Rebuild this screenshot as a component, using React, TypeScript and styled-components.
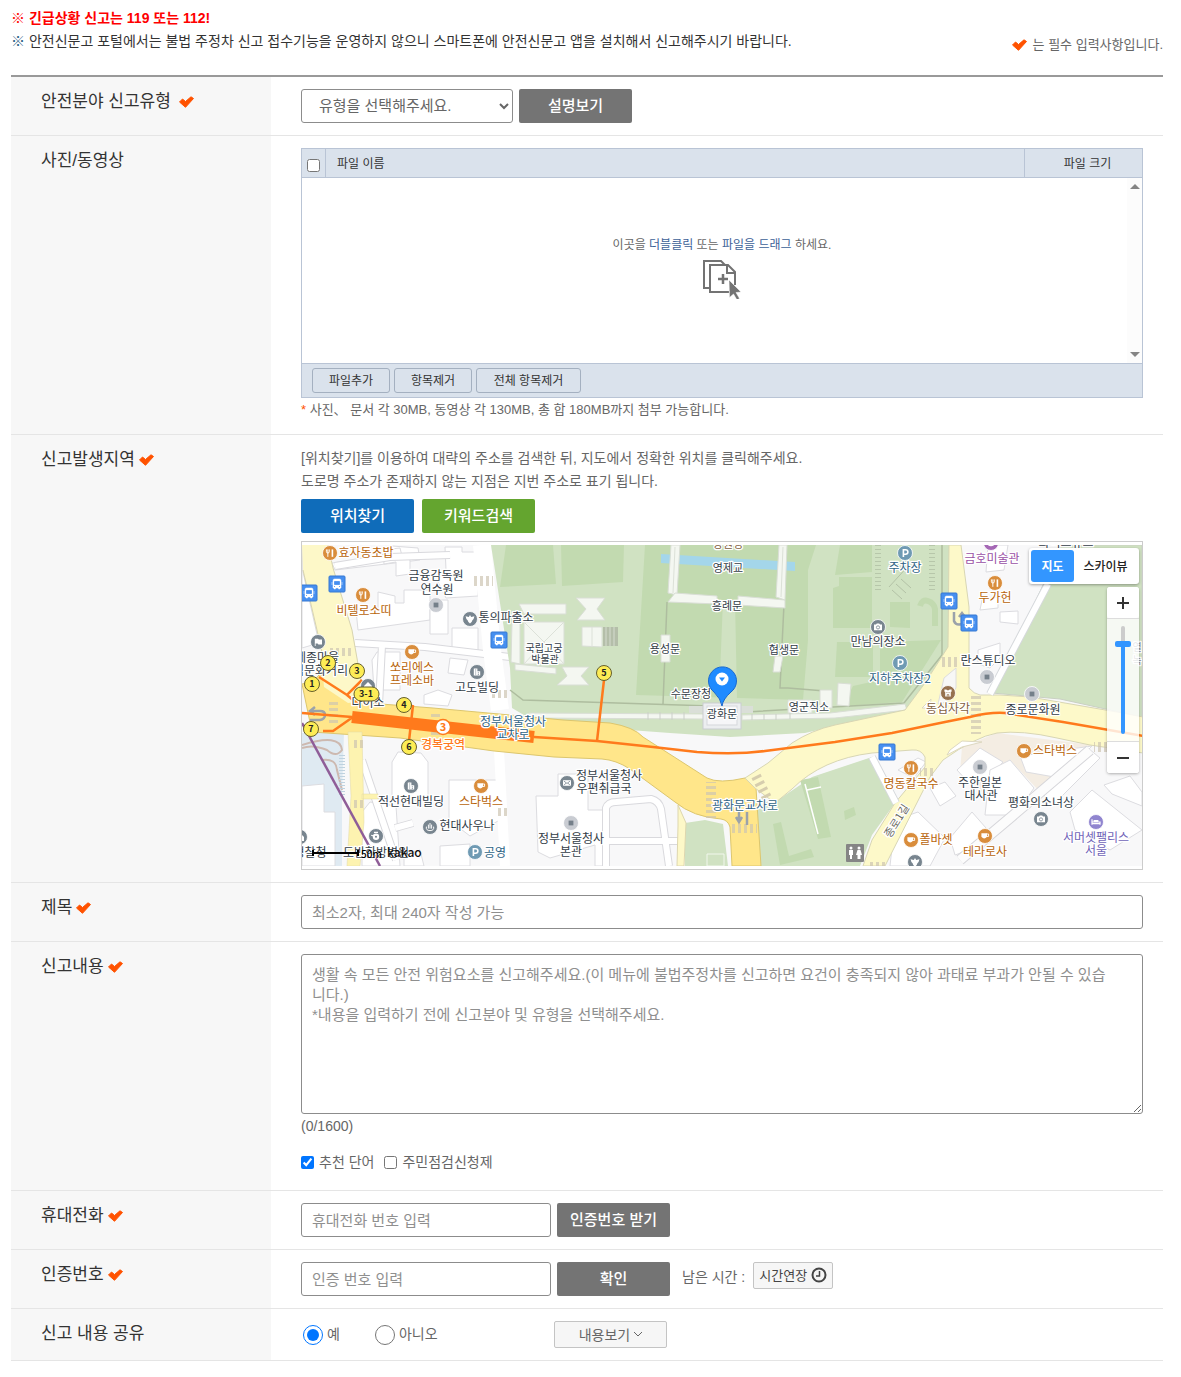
import React, { useState } from "react";
import styled, { createGlobalStyle, css } from "styled-components";

const sans = `"Liberation Sans", "Noto Sans CJK KR", sans-serif`;
const korean = `"Noto Sans CJK KR", "Liberation Sans", sans-serif`;

const GlobalStyle = createGlobalStyle`
  * { box-sizing: border-box; }
  body {
    margin: 0;
    background: #fff;
    color: #666;
    font-family: ${sans};
    font-size: 14px;
    line-height: 23px;
  }
  input, select, textarea, button { font-family: inherit; }
`;

const Page = styled.main`
  padding: 7px 18px 16px 11px;
`;

const Intro = styled.header`
  display: flex;
  justify-content: space-between;
  align-items: flex-end;
  padding-bottom: 22px;
`;

const Notice = styled.p<{ $urgent?: boolean }>`
  margin: 0;
  color: ${(p) => (p.$urgent ? "#f00" : "#333")};
  font-weight: ${(p) => (p.$urgent ? 700 : 400)};
`;

const NoticeMark = styled.span`
  color: #2c5f86;
`;

const RequiredNote = styled.p`
  display: flex;
  align-items: center;
  gap: 6px;
  margin: 0 0 -3px;
  font-size: 13px;
`;

const CheckSvg = styled.svg`
  flex: none;
  width: 15px;
  height: 12px;
  fill: #ff5200;
  stroke: #ff5200;
  stroke-linejoin: round;
`;

const Form = styled.form`
  border-top: 2px solid #999;
`;

const Row = styled.div`
  display: grid;
  grid-template-columns: 260px minmax(0, 1fr);
  border-bottom: 1px solid #e5e5e5;
`;

const LabelCell = styled.div<{ $wide?: boolean }>`
  display: flex;
  align-items: center;
  align-content: flex-start;
  flex-wrap: wrap;
  gap: ${(p) => (p.$wide ? 8 : 4)}px;
  padding: 13px 0 11px 30px;
  background: #f7f7f7;
  color: #333;
  font-size: 17px;
  line-height: 24px;
`;

const Content = styled.div`
  padding: 12px 20px 12px 30px;
`;

const Line = styled.div<{ $gap?: number; $top?: boolean }>`
  display: flex;
  align-items: ${(p) => (p.$top ? "flex-start" : "center")};
  gap: ${(p) => p.$gap ?? 6}px;
`;

const field = css`
  border: 1px solid #8c8c8c;
  border-radius: 3px;
  background: #fff;
  color: #666;
  font-size: 15px;
  &::placeholder { color: #8f8f8f; opacity: 1; }
`;

const TextInput = styled.input<{ $short?: boolean }>`
  ${field}
  display: block;
  width: ${(p) => (p.$short ? "250px" : "100%")};
  height: 34px;
  padding: 0 10px;
`;

const TypeSelect = styled.select`
  ${field}
  width: 212px;
  height: 34px;
  padding: 0 0 2px 13px;
`;

const TextArea = styled.textarea`
  ${field}
  display: block;
  width: 100%;
  height: 160px;
  padding: 10px 28px 10px 10px;
  line-height: 20px;
`;

const ActionButton = styled.button<{ $color?: string }>`
  width: 113px;
  height: 34px;
  padding: 0 0 3px;
  border: 0;
  border-radius: 2px;
  background: ${(p) => p.$color ?? "#747474"};
  color: #fff;
  font-size: 15px;
  font-weight: 500;
`;

const SmallButton = styled.button<{ $wide?: boolean }>`
  display: flex;
  align-items: center;
  justify-content: center;
  gap: 4px;
  width: ${(p) => (p.$wide ? 113 : 80)}px;
  height: 27px;
  padding: 0 0 2px;
  border: 1px solid #c4c4c4;
  border-radius: 2px;
  background: #f6f6f6;
  color: ${(p) => (p.$wide ? "#666" : "#444")};
  font-size: ${(p) => (p.$wide ? 14 : 13)}px;
`;

/* file uploader */

const Uploader = styled.div`
  border: 1px solid #b9c4d5;
  color: #333;
  font-size: 12px;
`;

const FileTable = styled.table`
  width: 100%;
  table-layout: fixed;
  border-collapse: separate;
  border-spacing: 0;
`;

const FileHead = styled.th<{ $width?: number; $left?: boolean }>`
  width: ${(p) => (p.$width ? `${p.$width}px` : "auto")};
  height: 29px;
  padding: 2px 0 0 ${(p) => (p.$left ? 11 : 8)}px;
  border: solid #b9c4d5;
  border-width: 0 1px 1px 0;
  background: #dae2ec;
  font-weight: 400;
  line-height: 20px;
  text-align: ${(p) => (p.$left ? "left" : "center")};
  &:first-child { padding: 0; }
  &:last-child { border-right: 0; }
`;

const Tick = styled.input`
  width: 13px;
  height: 13px;
  margin: 0;
  vertical-align: middle;
`;

const HeadTick = styled(Tick)`
  display: block;
  margin: 4px auto 0;
`;

const DropZone = styled.div`
  display: flex;
  height: 185px;
  padding-left: 15px;
`;

const DropHint = styled.div`
  display: flex;
  flex: 1;
  flex-direction: column;
  align-items: center;
  gap: 1px;
  padding-top: 56px;
  color: #666;
  b { color: #3c6197; font-weight: 400; }
`;

const ScrollTrack = styled.div`
  display: flex;
  flex-direction: column;
  justify-content: space-between;
  align-items: center;
  width: 15px;
  padding: 6px 0;
  background: #fcfcfc;
`;

const UploadActions = styled.div`
  display: flex;
  gap: 4px;
  padding: 4px 10px;
  border-top: 1px solid #b9c4d5;
  background: #dae2ec;
`;

const FileButton = styled.button<{ $wide?: boolean }>`
  width: ${(p) => (p.$wide ? 105 : 78)}px;
  height: 25px;
  padding: 0 0 2px;
  border: 1px solid #a4b0c0;
  border-radius: 3px;
  background: transparent;
  color: #333;
  font-size: 12px;
`;

const FileNote = styled.p`
  margin: 0;
  font-size: 13px;
  line-height: 24px;
  span { color: #ff5200; }
`;

/* map */

const Guide = styled.p`
  margin: 0 0 6px;
`;

const MapFrame = styled.div`
  position: relative;
  margin-top: 8px;
  padding: 3px 0;
  border: 1px solid #ccc;
`;

const MapCanvas = styled.svg`
  display: block;
  width: 100%;
  height: 321px;
  font-family: ${korean};
`;

const MapTypes = styled.div`
  position: absolute;
  top: 6px;
  right: 3px;
  display: flex;
  padding: 2px;
  border-radius: 3px;
  background: #fff;
  box-shadow: 0 1px 3px rgba(0, 0, 0, 0.35);
`;

const MapTypeButton = styled.button<{ $active?: boolean }>`
  width: ${(p) => (p.$active ? 43 : 63)}px;
  height: 32px;
  padding: 0 0 1px;
  border: 0;
  border-radius: 3px;
  background: ${(p) => (p.$active ? "#3396ff" : "#fff")};
  color: ${(p) => (p.$active ? "#fff" : "#222")};
  font-size: 12px;
  font-weight: ${(p) => (p.$active ? 700 : 500)};
`;

const ZoomControl = styled.div`
  position: absolute;
  top: 45px;
  right: 3px;
  display: flex;
  flex-direction: column;
  width: 32px;
  border-radius: 3px;
  background: rgba(255, 255, 255, 0.8);
  box-shadow: 0 1px 3px rgba(0, 0, 0, 0.3);
`;

const ZoomButton = styled.button`
  display: flex;
  align-items: center;
  justify-content: center;
  height: 31px;
  padding: 0;
  border: 0;
  border-radius: 3px;
  background: #fff;
`;

const ZoomSlot = styled.div`
  display: flex;
  justify-content: center;
  padding: 7px 0;
  border: solid #ddd;
  border-width: 1px 0;
`;

const ZoomRange = styled.input`
  appearance: none;
  writing-mode: vertical-lr;
  direction: rtl;
  width: 16px;
  height: 108px;
  margin: 0;
  background: transparent;
  &::-webkit-slider-runnable-track {
    width: 4px;
    height: 108px;
    border-radius: 2px;
    background: linear-gradient(to bottom, #ccc 18px, #3396ff 18px);
  }
  &::-webkit-slider-thumb {
    appearance: none;
    width: 16px;
    height: 6px;
    margin-left: -6px;
    border-radius: 2px;
    background: #3396ff;
  }
`;

/* lower rows */

const Counter = styled.p`
  margin: 0;
  line-height: 24px;
`;

const Options = styled.div`
  display: flex;
  align-items: center;
  gap: 10px;
  height: 32px;
  margin-top: 8px;
`;

const Option = styled.label`
  display: flex;
  align-items: center;
  gap: 5px;
`;

const Remaining = styled.span`
  padding: 0 2px 0 6px;
  line-height: 30px;
`;

const Radios = styled.div`
  display: flex;
  gap: 35px;
  width: 253px;
  padding-left: 2px;
`;

const RadioLabel = styled.label`
  display: flex;
  align-items: center;
  gap: 4px;
`;

const Radio = styled.input`
  width: 20px;
  height: 20px;
  margin: 0;
`;

/* ---- map drawing ---- */

type Kind =
  | "food" | "cup" | "dot" | "cam" | "park" | "bank" | "police"
  | "flag" | "mail" | "spa" | "bed" | "art" | "pot" | "owl" | "home";

const kindColor: Record<Kind, string> = {
  food: "#d98d3c", cup: "#d98d3c", dot: "#c9ccd2", cam: "#78858f", park: "#6f9ab3",
  bank: "#78858f", police: "#78858f", flag: "#78858f", mail: "#78858f", spa: "#78858f",
  bed: "#9085cf", art: "#a568b5", pot: "#78858f", owl: "#96714f", home: "#78858f",
};

function Glyph({ kind }: { kind: Kind }) {
  const line = { fill: "none", stroke: "#fff", strokeWidth: 1.2 } as const;
  switch (kind) {
    case "food":
      return (
        <g {...line}>
          <path d="M-4.500-4.500v3q0 1.500 1.800 1.500t1.800-1.500v-3M-2.700-4.500V4.800" />
          <path d="M3 4.800V-4.500" strokeWidth="2" />
        </g>
      );
    case "cup":
      return <g><path d="M-4.500-3.500h7v4.500q-3.500 4-7 0z" fill="#fff" /><path d="M2-2.500h2.500v3H2" {...line} /></g>;
    case "dot":
      return <rect x="-3" y="-3" width="6" height="6" fill="#75808a" />;
    case "cam":
      return <g><path d="M-5-3h2.500l1-1.500h3l1 1.500h2.500v7h-10z" fill="#fff" /><circle r="2" cy=".5" fill="none" stroke="#78858f" /></g>;
    case "park":
      return <path d="M-2 5v-9H.6q3 0 3 2.800T.6 1.600h-2.600" {...line} strokeWidth="2" />;
    case "bank":
      return <g><path d="M-4 4.500v-9h4.500v3.500h3.500v5.500z" fill="#fff" /><path d="M-2.500-2.500h1.500M-2.500 0h1.500M-2.500 2.500h1.500M1 1h1.500M1 3h1.500" stroke="#78858f" /></g>;
    case "police":
      return <path d="M-5.500-3.500L-1.500-2.500 0-5l1.500 2.500 4-1Q5 0 3 1.500 2 5 0 5.500-2 5-3 1.500-5 0-5.500-3.500z" fill="#fff" />;
    case "flag":
      return <path d="M-4 5v-9h4l1 1h4v6h-4.500l-1-1h-2.500v3z" fill="#fff" />;
    case "mail":
      return <g><rect x="-5" y="-3.500" width="10" height="7" fill="#fff" /><path d="M-4-2.500L0 .5l4-3M-4 3l3-3M4 3L1 0" fill="none" stroke="#78858f" /></g>;
    case "spa":
      return <g {...line}><path d="M-4.500-.5q-1 5 4.500 5t4.500-5M-2 2v-5M0 2v-7M2 2v-5" /></g>;
    case "bed":
      return <g><path d="M-5-3.500v7M5 3.500V0H-5v2H5" fill="none" stroke="#fff" strokeWidth="1.500" /><rect x="-3" y="-2.500" width="6" height="2.500" fill="#fff" /></g>;
    case "art":
      return <path d="M-3.500 3q3.500 2 7 0V0q-1-3-3.500-3.500T-3.500 0z" fill="#fff" />;
    case "pot":
      return <g><circle r="4" cy="1" fill="#fff" /><path d="M-2.500-4.500h5M-6-1l3 1" stroke="#fff" strokeWidth="1.500" /><circle r="1.300" cy="1" fill="#78858f" /></g>;
    case "owl":
      return <g><path d="M-4.500-4.500h2.500l1 1h2l1-1h2.500v3h-1v6h-7v-6h-1z" fill="#fff" /><path d="M-2-.5h1.300M.7-.5H2M-1 4.500V2h2v2.500" stroke="#96714f" fill="none" /></g>;
    default:
      return <path d="M-5 0l5-5 5 5v5H2V2h-4v3h-3z" fill="#fff" />;
  }
}

const markers: [Kind, number, number][] = [
  ["food", 330, 553], ["food", 363, 595], ["dot", 436, 605], ["police", 470, 619],
  ["flag", 318, 642], ["cup", 412, 652], ["bank", 477, 672], ["home", 368, 686],
  ["bank", 411, 786], ["cup", 481, 786], ["spa", 430, 827], ["pot", 376, 836],
  ["park", 475, 852], ["mail", 567, 783], ["dot", 571, 823], ["park", 905, 553],
  ["cam", 878, 627], ["park", 900, 663], ["owl", 948, 693], ["art", 991, 543],
  ["food", 995, 583], ["dot", 987, 677], ["dot", 1032, 694], ["cup", 1024, 751],
  ["dot", 980, 767], ["food", 911, 768], ["cam", 1041, 819], ["bed", 1096, 822],
  ["cup", 985, 836], ["cup", 911, 840], ["police", 915, 862], ["home", 300, 837],
];

const ink = "#333d47";
const orange = "#b8640a";
const teal = "#2f6486";
const brown = "#82603e";

const labels: [string, number, number, string, number?][] = [
  ["효자동초밥", 366, 557, orange], ["금융감독원", 436, 580, ink], ["연수원", 437, 594, ink],
  ["비텔로소띠", 364, 615, orange], ["통의파출소", 506, 622, ink], ["세종마을", 317, 662, ink],
  ["음식문화거리", 315, 675, ink], ["쏘리에스", 412, 672, orange], ["프레소바", 412, 685, orange],
  ["고도빌딩", 477, 692, ink], ["다이소", 368, 707, ink], ["국립고궁", 544, 652, ink, 10],
  ["박물관", 545, 663, ink, 10], ["정부서울청사", 513, 726, teal], ["교차로", 513, 739, teal],
  ["적선현대빌딩", 411, 806, ink], ["스타벅스", 481, 806, orange], ["현대사우나", 467, 830, ink],
  ["도반한방병원", 376, 857, ink], ["경찰청", 310, 857, ink], ["공영", 495, 857, teal],
  ["정부서울청사", 609, 780, ink], ["우편취급국", 604, 793, ink], ["정부서울청사", 571, 843, ink],
  ["본관", 571, 856, ink], ["향원정", 728, 548, brown, 11], ["영제교", 728, 572, ink, 11],
  ["흥례문", 727, 610, ink, 11], ["용성문", 665, 653, ink, 11], ["협생문", 784, 654, ink, 11],
  ["수문장청", 691, 698, ink, 11], ["광화문", 722, 718, ink, 11], ["영군직소", 809, 711, ink, 11],
  ["주차장", 905, 572, teal], ["만남의장소", 878, 646, ink], ["지하주차장2", 900, 683, teal],
  ["동십자각", 948, 713, brown], ["금호미술관", 992, 563, "#994fa5"], ["두가헌", 995, 602, orange],
  ["란스튜디오", 988, 665, ink], ["종로문화원", 1033, 714, ink], ["스타벅스", 1055, 755, orange],
  ["주한일본", 980, 787, ink], ["대사관", 981, 800, ink], ["평화의소녀상", 1041, 807, ink],
  ["명동칼국수", 911, 788, orange], ["광화문교차로", 745, 810, teal], ["서머셋팰리스", 1096, 842, "#7164b8"],
  ["서울", 1096, 855, "#7164b8"], ["테라로사", 985, 856, orange], ["폴바셋", 936, 844, orange],
  ["열", 1137, 651, "#8a9096", 10], ["녹", 1137, 664, "#8a9096", 10], ["화이트큐브", 1066, 547, ink],
];

const exits: [string, number, number][] = [
  ["1", 312, 684], ["2", 328, 663], ["3", 357, 671], ["4", 404, 705],
  ["5", 604, 673], ["6", 409, 747], ["7", 311, 729],
];

const buses: [number, number][] = [[309, 593], [337, 584], [499, 640], [949, 601], [969, 623], [887, 752]];

const blocks = [
  "302 545 303 572 319 643 302 648", "335 570 420 560 418 548 392 546 390 556 332 563",
  "383 550 400 548 402 556 410 560 410 574 396 576 396 562 384 564", "445 547 462 547 462 552 480 552 478 596 446 598 437 580 446 570",
  "356 610 378 610 378 592 395 596 395 603 404 603 404 590 430 590 430 620 358 630", "430 600 448 600 448 634 430 634",
  "452 628 478 628 478 651 452 651", "372 660 377 652 400 652 400 690 374 690", "450 658 468 660 464 675 448 673",
  "424 695 438 690 452 695 448 706 424 704", "392 762 398 752 421 753 428 762 428 800 392 800",
  "302 786 324 784 324 812 335 812 335 866 302 866", "449 780 500 780 500 820 470 836 449 820",
  "536 796 558 796 558 774 588 774 588 810 606 810 606 866 595 866 595 845 550 858 538 852",
  "362 812 370 802 396 806 400 866 362 866", "440 846 470 844 470 866 440 866", "404 855 420 850 424 866 404 866",
  "988 545 1008 545 1004 570 986 572", "982 600 998 597 998 608 980 610", "1000 612 1018 611 1018 624 1000 622",
  "978 650 1000 643 1000 658 990 668 978 664", "957 770 980 748 1003 762 985 782 968 782", "1020 756 1092 746 1060 778 1026 772",
  "990 770 1010 760 1034 788 1015 815 985 815", "1070 812 1092 790 1142 830 1110 850 1075 830", "1104 785 1130 776 1142 792 1142 806 1112 794",
  "950 838 972 812 986 828 975 848 955 855", "895 820 918 812 945 838 930 866 890 866", "1042 792 1088 748 1100 758 1052 806",
  "898 770 918 758 926 762 914 778", "930 788 945 782 956 796 940 806",
];

const darkGrass = [
  "506 545 553 545 556 584 500 587", "561 545 624 545 623 582 562 586", "645 545 816 545 808 570 808 640 803 700 636 695",
  "840 545 872 545 872 572 835 575", "839 577 872 577 872 628 833 628 833 588 839 586", "890 602 910 602 910 628 890 627",
  "837 642 873 642 873 677 835 677", "880 642 941 640 902 702 843 706 853 686 880 680",
];

const palace = [
  "671 545 680 545 677 595 668 593", "675 593 717 596 717 604 668 602", "738 596 785 600 785 608 738 605",
  "779 545 787 545 785 600 776 597", "519 604 566 604 566 614 524 614", "512 622 520 622 520 664 511 662",
  "524 622 564 622 564 664 524 664", "515 664 556 668 556 674 515 670", "576 598 605 598 597 609 605 620 577 620 586 609",
  "582 627 602 627 602 647 582 646", "562 667 589 667 581 676 589 685 557 685 567 676", "661 635 670 635 670 662 661 662",
  "775 656 783 656 780 672 773 672", "820 690 832 690 832 708 820 708", "838 683 851 684 849 706 837 705",
  "788 700 812 700 812 713 788 713", "529 713 704 714 704 719 529 718", "742 715 830 713 905 704 907 710 835 718 742 720",
];

const crossings: [number, number, number, number][] = [
  [328, 648, 26, 8], [471, 576, 22, 10], [329, 702, 9, 22], [431, 712, 9, 26], [942, 657, 16, 10],
  [731, 824, 26, 9], [706, 782, 10, 36], [971, 694, 10, 40], [1094, 742, 14, 10],
  [492, 690, 18, 8], [495, 808, 12, 8], [353, 740, 10, 8], [353, 800, 10, 8], [920, 768, 14, 8], [868, 862, 20, 4],
];

function PlaceMap() {
  return (
    <MapCanvas viewBox="302 545 840 321" preserveAspectRatio="xMidYMid slice" role="img" aria-label="신고발생지역 지도">
      <defs>
        <pattern id="bars-v" width="6" height="6" patternUnits="userSpaceOnUse">
          <rect width="3" height="6" fill="#cdc5b2" fillOpacity=".7" />
        </pattern>
        <pattern id="bars-h" width="6" height="6" patternUnits="userSpaceOnUse">
          <rect width="6" height="3" fill="#cdc5b2" fillOpacity=".7" />
        </pattern>
      </defs>
      <rect x="302" y="545" width="840" height="321" fill="#f8f8f9" />
      <path d="M302 733h42l-2 60v73h-40z" fill="#dfeaf2" />
      <path d="M302 745q38-12 40 5-6 8-15 0-14-6-25-2M322 760q14-2 15 10l5 20" fill="none" stroke="#cdb9b0" strokeWidth="2" />
      <path d="M342 755v40" stroke="#bfd2df" strokeDasharray="1 2" strokeWidth="6" />
      <path d="M962 747l35-14 95 12-52 47-30-32-28 32-22-20z" fill="#f4ede3" />
      {blocks.map((d) => <polygon key={d} points={d} fill="#fff" stroke="#dcdce0" />)}

      <g fill="none" strokeLinejoin="round">
        <g stroke="#d9d9dd" strokeWidth="8">
          <path d="M335 566l55-9 60-2M355 643l70 4 85 10M382 645l-3 60M362 760l34 100M395 828l18-5M606 866v-58q2-6 10-6l35-3q8 2 10 10l8 57M608 841h75" />
        </g>
        <g stroke="#fff" strokeWidth="6">
          <path d="M335 566l55-9 60-2M355 643l70 4 85 10M382 645l-3 60M362 760l34 100M395 828l18-5M606 866v-58q2-6 10-6l35-3q8 2 10 10l8 57M608 841h75" />
        </g>
        <path d="M482 545l10 105 8 60" stroke="#fff" strokeWidth="18" />
        <path d="M499 750l6 116" stroke="#fff" strokeWidth="10" />
      </g>

      <path d="M491 545h458v102l-9 17-35 46-100 23-75 4-60-4-68-5-73-10-17-10-2-40-12-78z" fill="#d0e2c2" />
      <path d="M1062 545h80v172l-82-18-68-6z" fill="#d0e2c2" stroke="#c9d0c2" />
      <path d="M775 802l37-25 60-20 23 46-23 32-12 31h-101l-2-56z" fill="#d0e2c2" />
      <path d="M685 823l20-3 18 4 5 42h-43z" fill="#d0e2c2" />
      <path d="M707 854h17v12h-17z" fill="none" stroke="#f1f7ec" />
      {darkGrass.map((d) => <polygon key={d} points={d} fill="#c2dab0" />)}
      <path d="M920 606q2-7 8-5t7 8v17" fill="none" stroke="#c2dab0" strokeWidth="6" />
      <path d="M800 780l18-3 13 60-13 2zM773 824l8-2 8 34 22-7 3 8-34 8zM844 811l10-4 2 8-11 5z" fill="#c2dab0" />
      <path d="M805 784l13 50M807 790l14-3" stroke="#fff" strokeWidth="1.500" fill="none" />
      <path d="M723 600h12l2 100h-18z" fill="#d0e2c2" />
      <path d="M661 554l134 8v9l-134-8z" fill="#a4d6ea" />
      <path d="M510 690l13 10 188 6M667 602l-4 102M784 604l-4 84h8l37 3M746 712l158-9 38-48V545" fill="none" stroke="#aebd9f" strokeWidth="1.500" />
      {palace.map((d) => <polygon key={d} points={d} fill="#f4f7f1" stroke="#d9ded5" />)}
      <path d="M524 622l20 20 20-20M544 642l-20 22M544 642l20 22M592 627v20M675 547l-2 46M783 547l-2 50" fill="none" stroke="#dce1d8" />
      <rect x="603" y="627" width="15" height="19" fill="#b4bea9" />
      <path d="M606 627v19M610 627v19M614 627v19" stroke="#d5dccf" />
      <path d="M648 712v8M660 712v8M672 712v8M684 712v8M752 714v6M764 714v6M776 714v6M790 713v6" stroke="#cbd0c8" />
      <path d="M689 706h64v7h-64z" fill="#dadfd8" />
      <rect x="703" y="703" width="38" height="26" fill="#eceef0" stroke="#c9ccd0" />
      <rect x="707" y="706" width="30" height="19" fill="#f6f6f8" stroke="#d5d7db" />
      <path d="M878 545v48M932 545v48" stroke="#b7c7aa" strokeWidth="6" strokeDasharray="1 3" />
      <path d="M889 587l20-22M892 590l10 9M896 584l10 9M901 579l10 9" stroke="#b3c2a6" />
      <path d="M302 684q12-2 18-10l8 8 40 21 65 5 77 7 53 5 47 3q24 4 33 14l64 41q12 6 38 0 10 2 11 10l5 78h-29l-2-39q-2-7-9-8-28-2-46-17l-45-33q-14-9-28-10l-48-2-60-6-94-13-88-6z" fill="#ffe68a" stroke="#dcc66e" />
      <path d="M302 545h26l5 23 19 62 13 71-17 2-24-16-4-43-17-74z" fill="#fdf8c8" />
      <path d="M328 545l5 23 19 62 12 68M303 570l17 73 4 20" fill="none" stroke="#d8d4b0" />
      <path d="M348 732h14l2 90-4 44h-13l4-70zM362 794h16v5h-16z" fill="#fdf3b0" stroke="#e3d9a4" strokeWidth=".5" />
      <path d="M678 805l8 18-2 43h-7l1-40z" fill="#fdf8c8" stroke="#ddd6ae" />
      <path d="M745 778l23-15 24-20q20-13 43-18l70-15 20-27 23-36 1-102h12l8 62v81q5 6 11 7h20l30 2 87 15 26 5v36l-53-8-33-7q-35-8-60-5-22 4-54 27l-13 17-45 89h-22l9-26 23-37 30-36v-10q-4-8-13-7l-40 3q-50 6-80 36l-17 14-20-15z" fill="#fdf9c9" stroke="#d8d6b4" />
      <path d="M944 678l12-10v20l-10 14-8 2z" fill="#f7f7f6" stroke="#ddd" />
      <path d="M950 750l12-9 20 1-20 5-15 8zM922 708l9-9-1 9z" fill="#fff" stroke="#ddd8c0" />
      <path d="M1048 584l-58 110M872 757l24 46" stroke="#d6d9dc" strokeWidth="8" fill="none" />
      <path d="M1048 584l-58 110M872 757l24 46" stroke="#fff" strokeWidth="6" fill="none" />
      <path d="M1090 750l-80 68-50 42" stroke="#d6d6da" strokeWidth="11" fill="none" />
      <path d="M1090 750l-80 68-50 42" stroke="#fcfcfc" strokeWidth="9" fill="none" />
      {crossings.map(([x, y, w, h]) => (
        <rect key={`${x}-${y}`} x={x} y={y} width={w} height={h} fill={w > h ? "url(#bars-v)" : "url(#bars-h)"} />
      ))}
      <path d="M756 776l16 32" stroke="#d6cdae" strokeWidth="10" strokeDasharray="3 4" />
      <path d="M739 812v9m-3-4l3 5 3-5M747 812v13M310 720h10q5-1 5-5t-5-4h-9m4-4l-5 4 5 4M954 612v9q2 5 8 3v-10m-3 3l3-4 3 4" fill="none" stroke="#9ba2aa" strokeWidth="2.500" />

      <path d="M302 723l78 143" stroke="#8f5d98" strokeWidth="2.500" />
      <g fill="none" stroke="#ff7a1c" strokeWidth="2.500">
        <path d="M302 713l50 4M319 677l28 18 15-15M347 695l12 10M323 731h10l20-14M413 705l-4 36M604 680l-7 61" />
        <path d="M534 737l63 4 56 6 44 5q38 3 68-1l70-9 57-9 53-11 25-5q20-5 35-4l58 9 80 14" />
        <path d="M352 717l182 20" strokeWidth="12" />
      </g>

      {buses.map(([x, y]) => (
        <g key={`${x}-${y}`} transform={`translate(${x} ${y})`}>
          <rect x="-8" y="-8" width="16" height="16" rx="1" fill="#468ff0" stroke="#3679d2" />
          <path d="M-4-3.500q0-1.500 1.500-1.500h5q1.500 0 1.500 1.500V4H3v1H1.500V4h-3v1H-3V4h-1zM-5-2v3M5-2v3" fill="#fff" stroke="#fff" strokeWidth=".5" />
          <path d="M-2.500-2.500h5V.500h-5zM-3 2.500h1M2 2.500h1" fill="#468ff0" stroke="#468ff0" strokeWidth=".8" />
        </g>
      ))}
      {markers.map(([kind, x, y]) => (
        <g key={`${kind}-${x}`} transform={`translate(${x} ${y})`}>
          <circle r="7.500" fill={kindColor[kind]} stroke="#fff" strokeWidth=".8" />
          <g transform="scale(.8)"><Glyph kind={kind} /></g>
        </g>
      ))}
      <g transform="translate(855 853)">
        <rect x="-9" y="-9" width="18" height="18" rx="1" fill="#858585" />
        <path d="M-6-3h4v5h-1v4h-2V2h-1zM2.500-3h3l1.500 5h-1.500v4h-3V2H1z" fill="#fff" />
        <circle cx="-4" cy="-5" r="1.500" fill="#fff" /><circle cx="4" cy="-5" r="1.500" fill="#fff" />
      </g>
      <g textAnchor="middle" fontSize="12" stroke="#fff" strokeWidth="2.500" strokeLinejoin="round" paintOrder="stroke">
        {labels.map(([text, x, y, color, size]) => (
          <text key={`${text}-${x}-${y}`} x={x} y={y} fill={color} fontSize={size ?? 12}>{text}</text>
        ))}
        <text x="443" y="749" fill="#ff7a1c" fontWeight="500">경복궁역</text>
        <text transform="translate(900 823) rotate(-58)" fill="#6b6b63" fontSize="11">종로1길</text>
      </g>
      <circle cx="443" cy="727" r="7.500" fill="#fff" stroke="#ff7a1c" strokeWidth="1.500" />
      <text x="443" y="731" textAnchor="middle" fontSize="11" fontWeight="700" fill="#ff7a1c">3</text>
      <rect x="354" y="687" width="25" height="14" rx="7" fill="#fdec55" stroke="#655f2c" />
      <text x="366" y="697" textAnchor="middle" fontSize="9" fontWeight="700" fill="#222">3-1</text>
      {exits.map(([n, x, y]) => (
        <g key={n}>
          <circle cx={x} cy={y} r="7.500" fill="#fdec55" stroke="#655f2c" />
          <text x={x} y={y + 3} textAnchor="middle" fontSize="9" fontWeight="700" fill="#222">{n}</text>
        </g>
      ))}
      <path d="M722 706q-1-7-8-14a14 14 0 1 1 17 0q-8 7-9 14z" fill="#1f8bff" stroke="#1768cf" />
      <circle cx="722" cy="679" r="6.500" fill="#fff" /><path d="M719 677.500h6l-3 4z" fill="#1f8bff" />
      <path d="M313 850v6M358 850v6M313 853h45" stroke="#000" strokeWidth="2" fill="none" />
      <text x="361" y="858" fontSize="10" fontWeight="500" fill="#000">50m</text>
      <text x="387" y="857" fontSize="12" fontWeight="500" fill="#111">kakao</text>
    </MapCanvas>
  );
}

function Check({ label }: { label?: string }) {
  return (
    <CheckSvg viewBox="0 0 15 12" role={label ? "img" : undefined} aria-label={label} aria-hidden={!label}>
      <path d="M.5 6l3-3L6.500 5.500 12 .8 14.500 2.500 6.500 11.300z" />
    </CheckSvg>
  );
}

function Label({ text, htmlFor, required, wide }: { text: string; htmlFor?: string; required?: boolean; wide?: boolean }) {
  return (
    <LabelCell $wide={wide}>
      {htmlFor ? <label htmlFor={htmlFor}>{text}</label> : <span>{text}</span>}
      {required && <Check label="필수" />}
    </LabelCell>
  );
}

export default function App() {
  const [body, setBody] = useState("");
  return (
    <Page>
      <GlobalStyle />
      <Intro>
        <div>
          <Notice $urgent>※ 긴급상황 신고는 119 또는 112!</Notice>
          <Notice>
            <NoticeMark>※</NoticeMark> 안전신문고 포털에서는 불법 주정차 신고 접수기능을 운영하지 않으니 스마트폰에 안전신문고 앱을 설치해서 신고해주시기 바랍니다.
          </Notice>
        </div>
        <RequiredNote><Check /> 는 필수 입력사항입니다.</RequiredNote>
      </Intro>

      <Form onSubmit={(e) => e.preventDefault()}>
        <Row>
          <Label text="안전분야 신고유형" htmlFor="type" required wide />
          <Content>
            <Line>
              <TypeSelect id="type"><option>유형을 선택해주세요.</option></TypeSelect>
              <ActionButton type="button">설명보기</ActionButton>
            </Line>
          </Content>
        </Row>

        <Row>
          <Label text="사진/동영상" />
          <Content>
            <Uploader>
              <FileTable>
                <thead>
                  <tr>
                    <FileHead $width={24}><HeadTick type="checkbox" aria-label="전체 선택" /></FileHead>
                    <FileHead $left>파일 이름</FileHead>
                    <FileHead $width={117}>파일 크기</FileHead>
                  </tr>
                </thead>
              </FileTable>
              <DropZone>
                <DropHint>
                  <span>이곳을 <b>더블클릭</b> 또는 <b>파일을 드래그</b> 하세요.</span>
                  <svg width="38" height="41" viewBox="0 0 38 41" fill="none" stroke="#737373" strokeWidth="2" aria-hidden>
                    <path d="M6 30H1V3h17l4 4" />
                    <path d="M26 34H7V7h18l7 7v13" />
                    <path d="M24 7v8h8" />
                    <path d="M20 16v10M15 21h10" strokeWidth="2.500" />
                    <path d="M26 22l12 12-5 .5 3.500 6-2.500 1.500-3.500-6-4 3.500z" fill="#737373" stroke="#fff" strokeWidth=".5" />
                  </svg>
                </DropHint>
                <ScrollTrack aria-hidden>
                  <svg width="10" height="5"><path d="M0 5l5-5 5 5z" fill="#858585" /></svg>
                  <svg width="10" height="5"><path d="M0 0l5 5 5-5z" fill="#858585" /></svg>
                </ScrollTrack>
              </DropZone>
              <UploadActions>
                <FileButton type="button">파일추가</FileButton>
                <FileButton type="button">항목제거</FileButton>
                <FileButton type="button" $wide>전체 항목제거</FileButton>
              </UploadActions>
            </Uploader>
            <FileNote><span>*</span> 사진、 문서 각 30MB, 동영상 각 130MB, 총 합 180MB까지 첨부 가능합니다.</FileNote>
          </Content>
        </Row>

        <Row>
          <Label text="신고발생지역" required />
          <Content>
            <Guide>
              [위치찾기]를 이용하여 대략의 주소를 검색한 뒤, 지도에서 정확한 위치를 클릭해주세요.<br />
              도로명 주소가 존재하지 않는 지점은 지번 주소로 표기 됩니다.
            </Guide>
            <Line $gap={8}>
              <ActionButton type="button" $color="#0f6cba">위치찾기</ActionButton>
              <ActionButton type="button" $color="#64a52f">키워드검색</ActionButton>
            </Line>
            <MapFrame>
              <PlaceMap />
              <MapTypes>
                <MapTypeButton type="button" $active>지도</MapTypeButton>
                <MapTypeButton type="button">스카이뷰</MapTypeButton>
              </MapTypes>
              <ZoomControl>
                <ZoomButton type="button" aria-label="확대">
                  <svg width="12" height="12"><path d="M6 0v12M0 6h12" stroke="#333" strokeWidth="2" /></svg>
                </ZoomButton>
                <ZoomSlot><ZoomRange type="range" aria-label="지도 배율" min={0} max={100} defaultValue={85} /></ZoomSlot>
                <ZoomButton type="button" aria-label="축소">
                  <svg width="12" height="12"><path d="M0 6h12" stroke="#333" strokeWidth="2" /></svg>
                </ZoomButton>
              </ZoomControl>
            </MapFrame>
          </Content>
        </Row>

        <Row>
          <Label text="제목" htmlFor="title" required />
          <Content><TextInput id="title" placeholder="최소2자, 최대 240자 작성 가능" /></Content>
        </Row>

        <Row>
          <Label text="신고내용" htmlFor="body" required />
          <Content>
            <TextArea
              id="body"
              value={body}
              onChange={(e) => setBody(e.target.value)}
              placeholder={"생활 속 모든 안전 위험요소를 신고해주세요.(이 메뉴에 불법주정차를 신고하면 요건이 충족되지 않아 과태료 부과가 안될 수 있습니다.)\n*내용을 입력하기 전에 신고분야 및 유형을 선택해주세요."}
            />
            <Counter>({body.length}/1600)</Counter>
            <Options>
              <Option><Tick type="checkbox" defaultChecked /> 추천 단어</Option>
              <Option><Tick type="checkbox" /> 주민점검신청제</Option>
            </Options>
          </Content>
        </Row>

        <Row>
          <Label text="휴대전화" htmlFor="phone" required />
          <Content>
            <Line>
              <TextInput id="phone" $short placeholder="휴대전화 번호 입력" />
              <ActionButton type="button">인증번호 받기</ActionButton>
            </Line>
          </Content>
        </Row>

        <Row>
          <Label text="인증번호" htmlFor="code" required />
          <Content>
            <Line $top>
              <TextInput id="code" $short placeholder="인증 번호 입력" />
              <ActionButton type="button">확인</ActionButton>
              <Remaining>남은 시간 :</Remaining>
              <SmallButton type="button">
                시간연장
                <svg width="16" height="16" fill="none" stroke="#444" aria-hidden>
                  <circle cx="8" cy="8" r="6.500" strokeWidth="2" />
                  <path d="M8.500 4v5H5" strokeWidth="1.500" />
                </svg>
              </SmallButton>
            </Line>
          </Content>
        </Row>

        <Row>
          <Label text="신고 내용 공유" />
          <Content>
            <Line $gap={0}>
              <Radios role="radiogroup" aria-label="신고 내용 공유">
                <RadioLabel><Radio type="radio" name="share" defaultChecked />예</RadioLabel>
                <RadioLabel><Radio type="radio" name="share" />아니오</RadioLabel>
              </Radios>
              <SmallButton type="button" $wide>
                내용보기
                <svg width="8" height="6" fill="none" stroke="#666" aria-hidden><path d="M0 1l4 4 4-4" /></svg>
              </SmallButton>
            </Line>
          </Content>
        </Row>
      </Form>
    </Page>
  );
}
